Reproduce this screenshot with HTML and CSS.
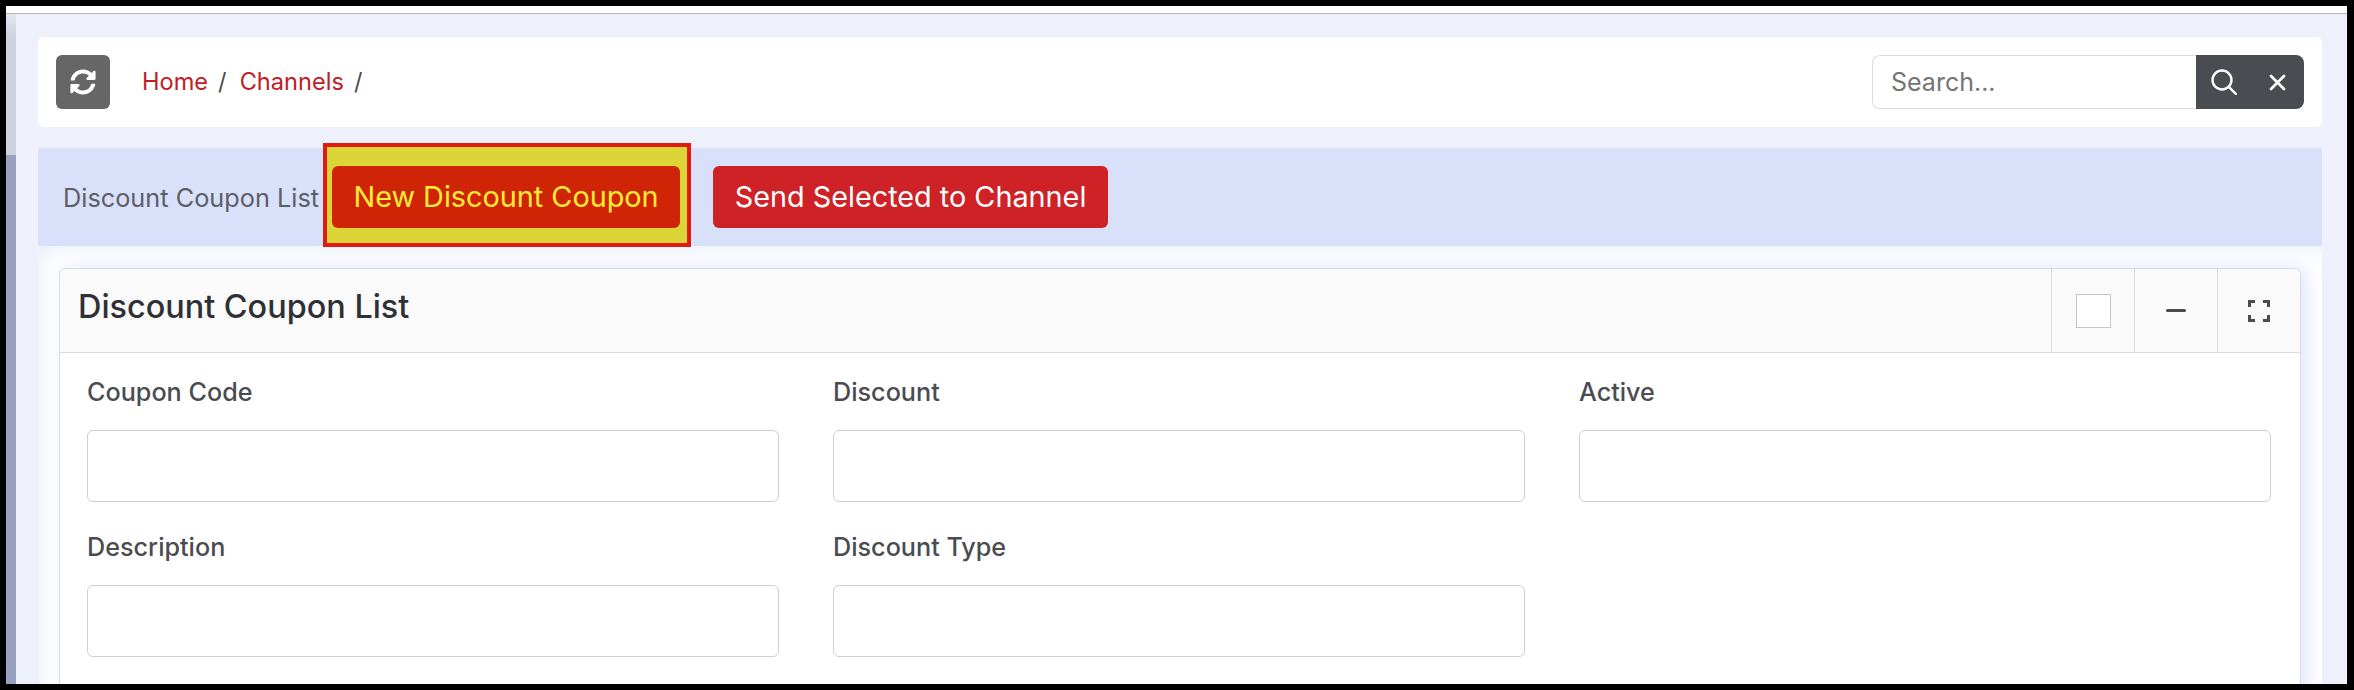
FILE: index.html
```html
<!DOCTYPE html>
<html lang="en">
<head>
<meta charset="utf-8">
<title>Discount Coupon List</title>
<link rel="stylesheet" href="styles.css">
</head>
<body>
<div class="frame">
  <div class="chrome-top"></div>
  <div class="shell">
    <div class="rail"></div>
    <main class="content">
      <header class="topbar">
        <button class="refresh" type="button" aria-label="Refresh">
          <svg width="26" height="26" viewBox="0 0 512 512" fill="#fff"><path d="M370.72 133.28C339.458 104.008 298.888 87.962 255.848 88c-77.458.068-144.328 53.178-162.791 126.85-1.344 5.363-6.122 9.15-11.651 9.15H24.103c-7.498 0-13.194-6.807-11.807-14.176C33.933 94.924 134.813 8 256 8c66.448 0 126.791 26.136 171.315 68.685L463.03 40.97C478.149 25.851 504 36.559 504 57.941V192c0 13.255-10.745 24-24 24H345.941c-21.382 0-32.09-25.851-16.971-40.971l41.75-41.749zM32 296h134.059c21.382 0 32.09 25.851 16.971 40.971l-41.75 41.75c31.262 29.273 71.835 45.319 114.876 45.28 77.418-.07 144.315-53.144 162.787-126.849 1.344-5.363 6.122-9.15 11.651-9.15h57.304c7.498 0 13.194 6.807 11.807 14.176C478.067 417.076 377.187 504 256 504c-66.448 0-126.791-26.136-171.315-68.685L48.97 471.03C33.851 486.149 8 475.441 8 454.059V320c0-13.255 10.745-24 24-24z"/></svg>
        </button>
        <nav class="crumbs">
          <a class="crumb" href="#">Home</a><span class="sep">/</span>
          <a class="crumb" href="#">Channels</a><span class="sep">/</span>
        </nav>
        <form class="search">
          <input class="search-input" type="text" placeholder="Search...">
          <div class="search-btns">
            <svg width="26" height="26" viewBox="0 0 26 26" fill="none" stroke="#fff" stroke-width="2.4" stroke-linecap="round"><circle cx="11" cy="11" r="9.500"/><path d="M17.800 17.800l7 7"/></svg>
            <svg width="17" height="17" viewBox="0 0 17 17" fill="none" stroke="#fff" stroke-width="2.800" stroke-linecap="round"><path d="M2 2l13 13M15 2L2 15"/></svg>
          </div>
        </form>
      </header>
      <section class="actions">
        <span class="actions-title">Discount Coupon List</span>
        <div class="highlight"><button class="btn btn-new" type="button">New Discount Coupon</button></div>
        <button class="btn btn-send" type="button">Send Selected to Channel</button>
      </section>
      <section class="sheet">
        <div class="panel">
          <div class="panel-head">
            <h2 class="panel-title">Discount Coupon List</h2>
            <div class="tool"><span class="check"></span></div>
            <div class="tool"><span class="minus"></span></div>
            <div class="tool">
              <svg width="22" height="22" viewBox="0 0 22 22" fill="none" stroke="#4b4c52" stroke-width="3"><path d="M1.500 7V1.500H7M15 1.500h5.500V7M20.500 15v5.500H15M7 20.500H1.500V15"/></svg>
            </div>
          </div>
          <div class="fields">
            <label class="field"><span class="label">Coupon Code</span><input class="input" type="text"></label>
            <label class="field"><span class="label">Discount</span><input class="input" type="text"></label>
            <label class="field"><span class="label">Active</span><input class="input" type="text"></label>
            <label class="field"><span class="label">Description</span><input class="input" type="text"></label>
            <label class="field"><span class="label">Discount Type</span><input class="input" type="text"></label>
          </div>
        </div>
      </section>
    </main>
  </div>
</div>
</body>
</html>
```
FILE: styles.css
```css
* { box-sizing: border-box; }
html, body { margin: 0; padding: 0; height: 100%; }
body { background: #000; font-family: Inter, "Liberation Sans", sans-serif; overflow: hidden; }
.frame { height: 690px; border: solid #000; border-width: 6px 7px 6px 6px; display: flex; flex-direction: column; overflow: hidden; background: #eef1fb; }
.chrome-top { height: 8px; flex: none; background: #fff; border-bottom: 1px solid #b4b5b8; }
.shell { flex: 1; display: flex; min-height: 0; }
.rail { width: 10px; flex: none; background: linear-gradient(#e4e7ee 0, #cdd2de 22px, #cdd2de 141px, #9aa1bf 141px); }
.content { flex: 1; min-width: 0; padding: 23px 24px 0 22px; border-right: 1px solid #f5f6f9; }
.topbar { height: 90px; background: #fff; border-radius: 6px; display: flex; align-items: center; padding: 0 18px; }
.refresh { width: 54px; height: 54px; border: 0; border-radius: 6px; background: #666; display: flex; align-items: center; justify-content: center; padding: 0; }
.crumbs { margin: -2px 0 0 32px; display: flex; align-items: center; font-size: 23.6px; color: #4b4c52; }
.crumb { color: #bf2026; text-decoration: none; }
.sep { margin: 0 13px 0 10px; }
.search { margin-left: auto; display: flex; height: 54px; }
.search-input { width: 324px; height: 54px; border: 1px solid #dcdcdc; border-right: 0; border-radius: 8px 0 0 8px; padding: 0 18px; font: 25px Inter, sans-serif; outline: 0; }
.search-input::placeholder { color: #757575; opacity: 1; }
.search-btns { width: 108px; background: #4b4c52; border-radius: 0 8px 8px 0; display: flex; align-items: center; padding-left: 15px; gap: 32px; }
.actions { margin-top: 21px; height: 98px; background: #d8e0fa; display: flex; align-items: center; padding-left: 25px; }
.actions-title { font-size: 25.3px; color: #5c5f66; }
.highlight { margin: 0 0 4px 4px; width: 368px; height: 104px; background: #dbd537; border: 4px solid #e01c12; display: flex; align-items: center; padding: 4px 0 0 5px; }
.btn { height: 62px; border: 0; border-radius: 6px; font: 400 28.8px/1 Inter, sans-serif; padding: 0; }
.btn-new { width: 348px; background: #cf2405; color: #ffee33; }
.btn-send { width: 395px; margin-left: 22px; background: #cf2227; color: #fff; }
.sheet { height: 500px; background: #fff; border-radius: 6px 6px 0 0; padding: 22px 21px 0 21px; box-shadow: inset 14px 14px 18px -10px #eceffb; }
.panel { height: 100%; border: 1px solid #d9dbe6; border-bottom: 0; border-radius: 6px 6px 0 0; background: #fff; box-shadow: 6px 0 18px rgba(214, 221, 250, .75); }
.panel-head { height: 84px; background: #fafafa; border-bottom: 1px solid #dcdcdc; border-radius: 6px 6px 0 0; display: flex; align-items: stretch; }
.panel-title { flex: 1; margin: 0; align-self: center; padding: 0 0 9px 18px; font-size: 32.4px; font-weight: 500; color: #2f3036; }
.tool { width: 83px; border-left: 1px solid #dcdcdc; display: flex; align-items: center; justify-content: center; }
.check { width: 35px; height: 34px; background: #fff; border: 1px solid #c6c6c6; }
.minus { width: 20px; height: 3px; background: #4b4c52; border-radius: 2px; }
.fields { display: grid; grid-template-columns: repeat(3, 692px); column-gap: 54px; row-gap: 28px; padding: 22px 0 0 27px; }
.field { display: block; }
.label { display: block; height: 55px; padding-top: 1px; font-size: 25.2px; line-height: 32px; font-weight: 500; color: #4b4c52; }
.input { display: block; width: 100%; height: 72px; border: 1px solid #cfcfcf; border-radius: 6px; background: #fff; outline: 0; }
```
